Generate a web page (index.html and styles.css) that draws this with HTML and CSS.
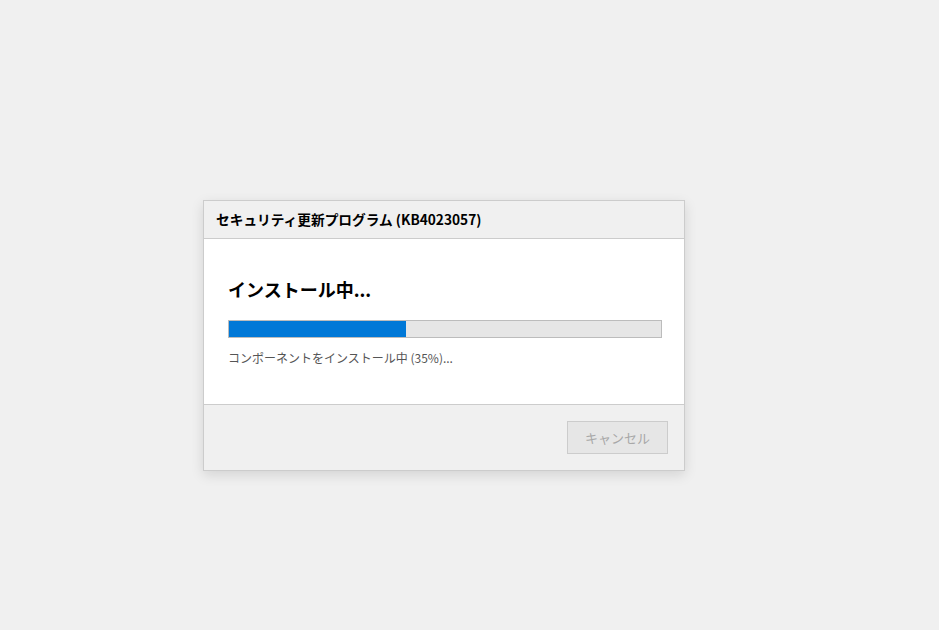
FILE: index.html
```html
<!DOCTYPE html>
<html lang="ja">
<head>
<meta charset="utf-8">
<link rel="stylesheet" href="styles.css">
</head>
<body>
<div class="page">
  <div class="dialog">
    <div class="dialog-header">セキュリティ更新プログラム (KB4023057)</div>
    <div class="dialog-body">
      <h1 class="status-title">インストール中...</h1>
      <div class="progress"><div class="progress-fill" style="width:41%"></div></div>
      <p class="status-text">コンポーネントをインストール中 (35%)...</p>
    </div>
    <div class="dialog-footer">
      <button class="btn" disabled>キャンセル</button>
    </div>
  </div>
</div>
</body>
</html>
```
FILE: styles.css
```css
html, body {
  margin: 0;
  padding: 0;
  background: #f0f0f0;
  font-family: "Noto Sans CJK JP", "Noto Sans", sans-serif;
}
.page {
  width: 939px;
  height: 630px;
  padding-top: 200px;
  padding-left: 203px;
  box-sizing: border-box;
}
.dialog {
  width: 482px;
  box-sizing: border-box;
  border: 1px solid #cccccc;
  background: #ffffff;
  box-shadow: 0 4px 12px rgba(0,0,0,0.12);
}
.dialog-header {
  height: 37px;
  background: #f0f0f0;
  border-bottom: 1px solid #cccccc;
  padding-left: 12px;
  font-size: 13.7px;
  font-weight: bold;
  color: #000;
  line-height: 37px;
}
.dialog-body {
  height: 165px;
  padding: 36px 22px 0 24px;
  box-sizing: border-box;
}
.status-title {
  margin: 0;
  font-size: 18px;
  font-weight: bold;
  line-height: 28px;
  color: #000;
}
.progress {
  margin-top: 17px;
  height: 16px;
  border: 1px solid #bcbcbc;
  background: #e6e6e6;
}
.progress-fill {
  height: 100%;
  background: #0078d7;
}
.status-text {
  margin: 11px 0 0;
  font-size: 12px;
  color: #555;
  line-height: 18px;
}
.dialog-footer {
  height: 66px;
  background: #f0f0f0;
  border-top: 1px solid #cccccc;
  display: flex;
  justify-content: flex-end;
  align-items: flex-start;
  padding: 16px 16px 0 0;
  box-sizing: border-box;
}
.btn {
  width: 101px;
  height: 33px;
  background: #e6e6e6;
  border: 1px solid #cccccc;
  color: #a8a8a8;
  font-family: inherit;
  font-size: 13px;
  padding: 0;
}
```
